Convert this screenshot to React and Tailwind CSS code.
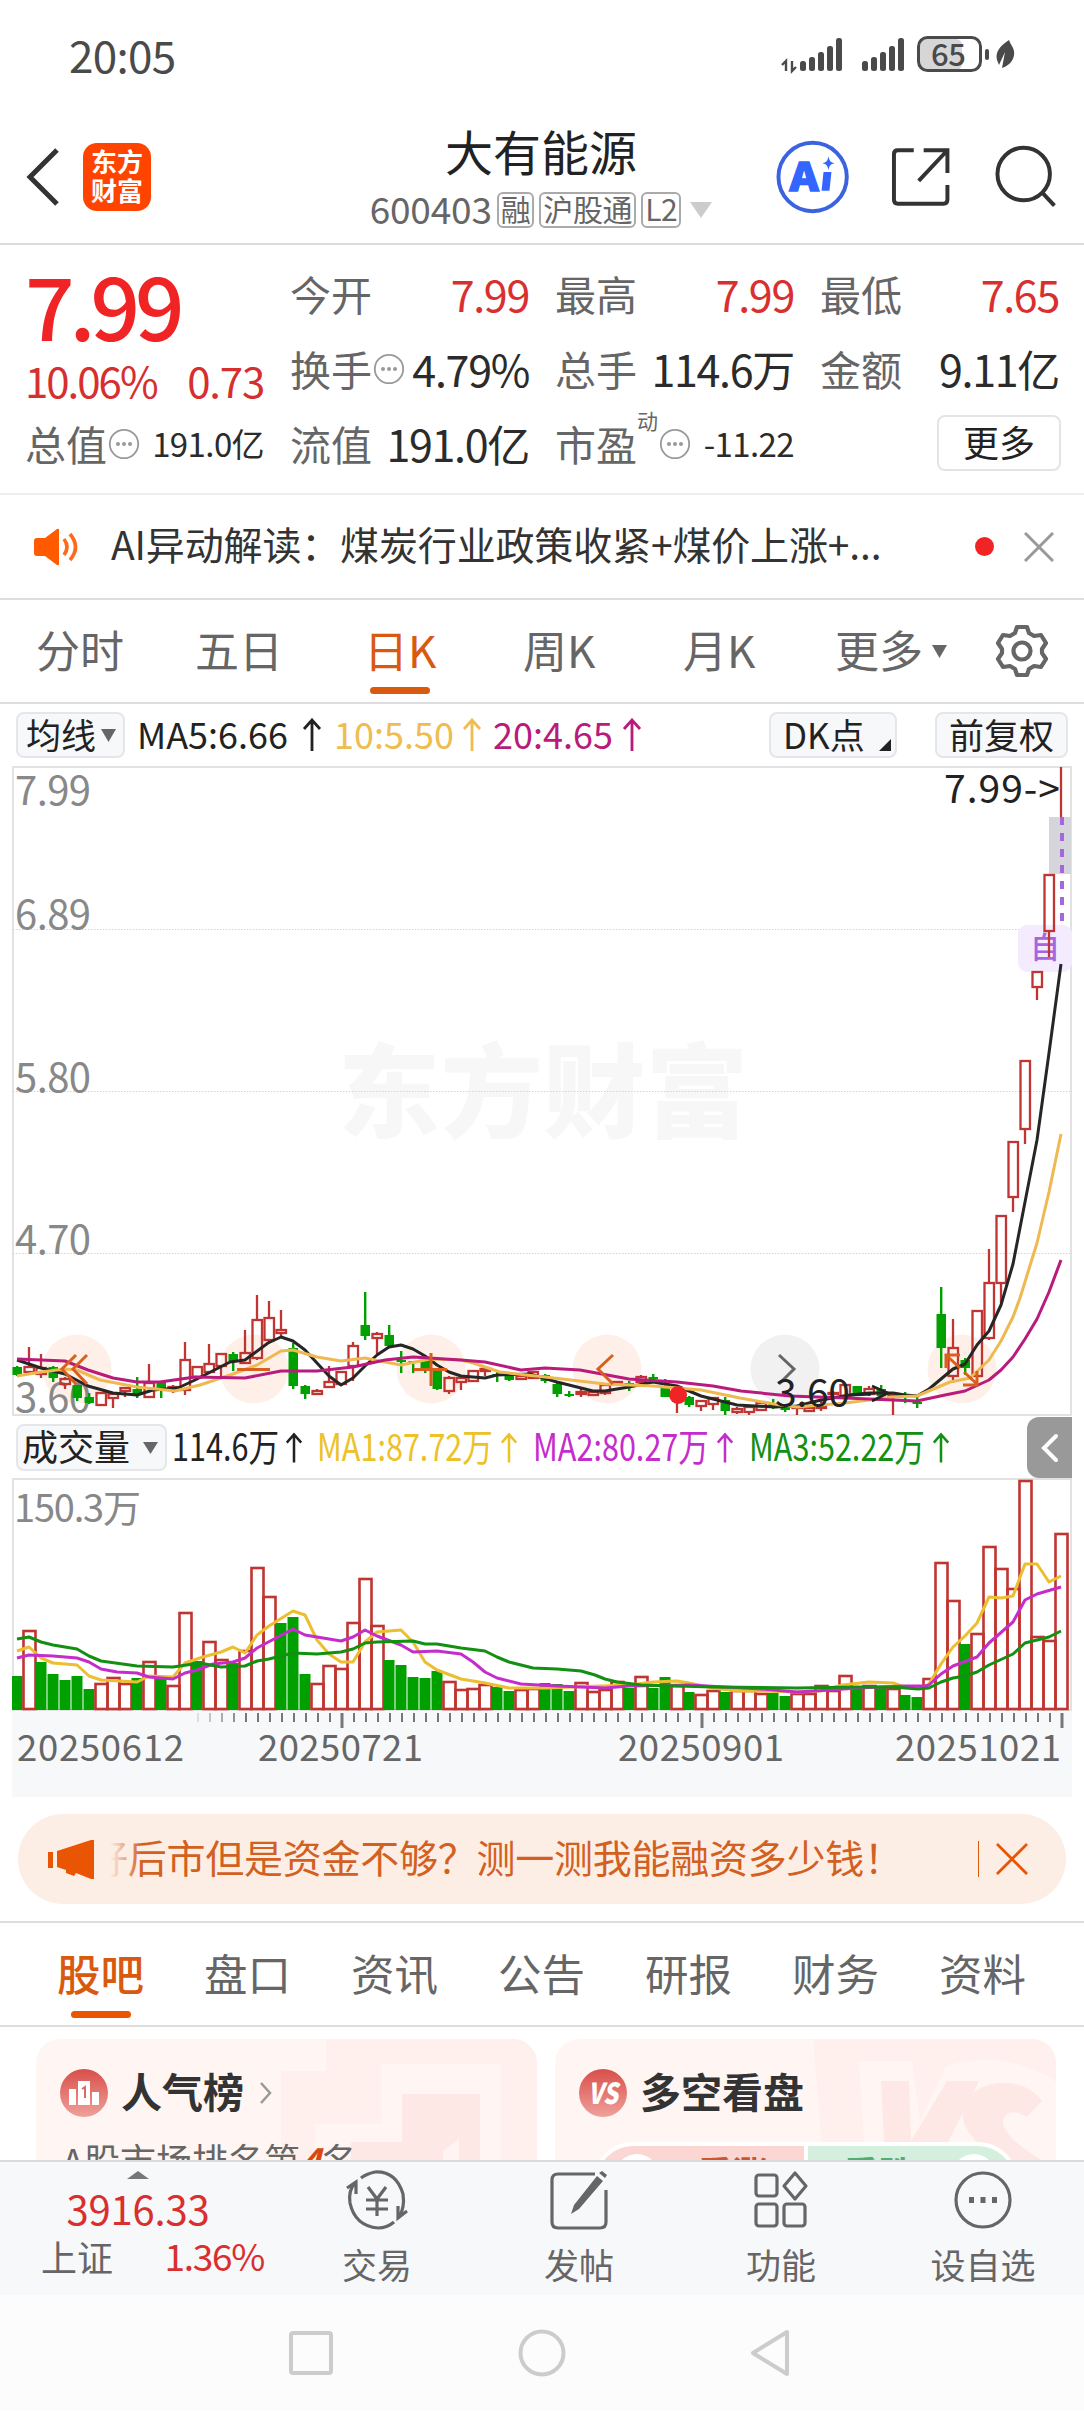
import React from 'react';

// [colour, body top, body bottom, wick top, wick bottom]
const CANDLES = [
  ['g', 1367, 1375, 1366, 1376], ['r', 1367, 1372, 1347, 1372], ['r', 1368, 1374, 1354, 1378], ['g', 1367, 1378, 1366, 1382],
  ['r', 1379, 1384, 1377, 1389], ['g', 1385, 1398, 1385, 1401], ['g', 1397, 1403, 1393, 1404], ['r', 1393, 1405, 1392, 1406],
  ['r', 1394, 1398, 1392, 1408], ['r', 1388, 1391, 1388, 1397], ['g', 1389, 1395, 1377, 1398], ['r', 1383, 1397, 1364, 1397],
  ['g', 1382, 1389, 1382, 1398], ['r', 1387, 1388, 1385, 1393], ['r', 1360, 1390, 1342, 1395], ['r', 1367, 1377, 1366, 1377],
  ['r', 1364, 1372, 1344, 1372], ['r', 1354, 1366, 1354, 1377], ['g', 1354, 1361, 1352, 1371], ['r', 1353, 1363, 1330, 1363],
  ['r', 1320, 1358, 1295, 1360], ['r', 1318, 1340, 1301, 1342], ['r', 1330, 1333, 1310, 1337], ['g', 1348, 1386, 1343, 1389],
  ['g', 1386, 1394, 1385, 1399], ['r', 1391, 1394, 1389, 1395], ['r', 1382, 1387, 1366, 1388], ['r', 1372, 1384, 1371, 1386],
  ['r', 1346, 1366, 1342, 1381], ['g', 1325, 1336, 1292, 1340], ['r', 1334, 1338, 1332, 1354], ['g', 1335, 1346, 1325, 1347],
  ['g', 1360, 1362, 1351, 1373], ['g', 1361, 1363, 1361, 1373], ['g', 1361, 1368, 1361, 1373], ['g', 1370, 1389, 1370, 1390],
  ['r', 1378, 1391, 1376, 1394], ['r', 1378, 1382, 1377, 1390], ['r', 1371, 1381, 1370, 1382], ['r', 1369, 1371, 1368, 1376],
  ['g', 1374, 1376, 1372, 1382], ['g', 1375, 1380, 1374, 1381], ['r', 1376, 1379, 1375, 1380], ['r', 1372, 1378, 1372, 1379],
  ['g', 1375, 1381, 1374, 1383], ['g', 1384, 1394, 1382, 1397], ['g', 1394, 1396, 1391, 1397], ['r', 1392, 1394, 1389, 1397],
  ['r', 1392, 1395, 1390, 1396], ['r', 1385, 1393, 1385, 1395], ['r', 1382, 1384, 1381, 1385], ['g', 1383, 1386, 1381, 1391],
  ['r', 1377, 1382, 1375, 1383], ['g', 1377, 1379, 1374, 1381], ['g', 1388, 1397, 1379, 1397], ['r', 1393, 1396, 1390, 1413],
  ['g', 1397, 1405, 1396, 1407], ['r', 1401, 1406, 1400, 1411], ['r', 1398, 1404, 1398, 1410], ['g', 1400, 1411, 1397, 1415],
  ['r', 1409, 1412, 1407, 1414], ['r', 1407, 1412, 1406, 1415], ['r', 1403, 1410, 1403, 1411], ['g', 1404, 1406, 1399, 1409],
  ['g', 1407, 1410, 1405, 1412], ['r', 1407, 1408, 1406, 1415], ['r', 1408, 1411, 1406, 1412], ['r', 1406, 1408, 1399, 1411],
  ['r', 1393, 1394, 1391, 1396], ['r', 1385, 1396, 1384, 1397], ['g', 1386, 1395, 1386, 1395], ['r', 1389, 1394, 1386, 1396],
  ['g', 1389, 1396, 1385, 1398], ['r', 1394, 1396, 1394, 1415], ['g', 1394, 1396, 1392, 1403], ['g', 1402, 1404, 1397, 1408],
  ['r', 1348, 1348, 1348, 1348], ['g', 1314, 1348, 1287, 1368], ['r', 1348, 1376, 1319, 1383], ['g', 1360, 1368, 1358, 1375],
  ['r', 1311, 1376, 1311, 1376], ['r', 1283, 1338, 1249, 1340], ['r', 1216, 1283, 1216, 1303], ['r', 1142, 1197, 1142, 1212],
  ['r', 1061, 1129, 1061, 1144], ['r', 972, 987, 972, 1000], ['r', 875, 931, 875, 957], ['r', 767, 767, 767, 817],
];

const MA5 = '17,1360 41,1368 65,1374 88,1386 113,1393 137,1395 153,1390 178,1388 195,1380 230,1362 245,1360 268,1343 281,1337 293,1341 305,1350 317,1363 329,1376 341,1385 353,1378 365,1366 377,1355 389,1347 401,1345 413,1349 425,1356 437,1365 449,1372 461,1376 485,1378 497,1375 530,1374 557,1382 593,1391 605,1391 629,1387 653,1382 677,1386 701,1396 737,1405 775,1407 797,1406 821,1400 850,1395 869,1393 893,1393 905,1395 917,1396 929,1389 953,1369 965,1364 977,1345 989,1331 1001,1305 1013,1264 1025,1202 1037,1140 1049,1053 1061,964';
const MA10 = '17,1376 41,1372 65,1369 77,1370 100,1380 137,1387 175,1391 200,1385 233,1374 257,1365 281,1351 293,1350 317,1357 341,1361 365,1358 385,1362 401,1365 430,1359 461,1360 473,1363 500,1372 545,1377 605,1384 653,1386 701,1390 740,1398 780,1405 797,1407 845,1403 893,1397 917,1396 950,1382 970,1378 989,1360 1001,1341 1013,1317 1020,1298 1037,1243 1049,1192 1061,1134';
const MA20 = '17,1359 65,1361 88,1370 113,1378 137,1382 160,1382 195,1377 245,1378 281,1371 317,1371 353,1367 385,1360 413,1357 461,1360 485,1362 521,1370 545,1368 580,1370 629,1379 677,1382 713,1386 741,1391 790,1396 845,1398 893,1400 917,1401 945,1395 965,1391 989,1380 1001,1370 1013,1357 1025,1339 1037,1319 1049,1292 1061,1260';

// tops of the volume bars, colour first
const VOLUMES = [
  'g1676', 'r1630', 'g1662', 'g1674', 'g1680', 'g1676', 'g1689', 'r1683', 'r1677', 'r1683', 'g1678',
  'r1661', 'g1678', 'r1685', 'r1612', 'g1661', 'r1641', 'r1659', 'g1663', 'r1650', 'r1567', 'r1596',
  'g1623', 'g1617', 'g1674', 'r1683', 'r1665', 'r1668', 'r1622', 'r1578', 'r1625', 'g1660', 'g1665',
  'g1677', 'g1678', 'g1671', 'r1681', 'r1689', 'r1688', 'r1684', 'g1687', 'g1691', 'r1689', 'r1688',
  'g1683', 'g1684', 'g1691', 'r1682', 'r1691', 'r1689', 'r1681', 'g1688', 'r1676', 'g1688', 'g1677',
  'r1685', 'g1692', 'r1694', 'r1690', 'g1692', 'r1690', 'r1690', 'r1693', 'g1693', 'g1696', 'r1693',
  'r1693', 'r1685', 'r1690', 'r1675', 'g1688', 'r1685', 'g1687', 'r1688', 'g1695', 'g1697', 'r1678',
  'r1562', 'r1600', 'g1644', 'r1633', 'r1546', 'r1568', 'r1588', 'r1480', 'r1636', 'r1640', 'r1533',
];

const VMA1 = '17,1651 29,1647 41,1658 53,1663 77,1665 89,1676 101,1680 137,1682 149,1676 173,1677 185,1663 203,1657 221,1652 233,1647 245,1653 257,1635 269,1626 293,1611 305,1615 317,1640 329,1654 341,1662 353,1662 365,1642 377,1632 401,1630 413,1642 425,1662 437,1670 461,1679 485,1683 509,1688 545,1688 629,1685 653,1682 677,1681 689,1683 713,1688 737,1691 761,1691 797,1692 821,1691 842,1685 869,1682 893,1683 905,1687 925,1687 929,1684 941,1664 953,1647 965,1636 977,1623 989,1597 1001,1598 1013,1596 1025,1564 1037,1564 1049,1582 1061,1576';
const VMA2 = '17,1658 29,1655 53,1656 77,1658 89,1662 101,1669 117,1672 137,1673 149,1677 173,1679 185,1673 197,1670 213,1664 233,1662 245,1658 257,1648 293,1629 305,1635 329,1639 341,1641 353,1637 365,1630 377,1636 401,1645 413,1652 437,1651 461,1654 473,1662 485,1672 497,1678 521,1684 557,1686 605,1688 629,1686 689,1685 761,1689 797,1692 831,1690 857,1688 905,1686 925,1686 929,1685 941,1674 953,1666 977,1657 989,1643 1013,1622 1025,1600 1037,1594 1061,1587';
const VMA3 = '17,1639 29,1637 41,1642 53,1645 77,1649 89,1656 101,1661 137,1666 173,1667 200,1663 221,1667 245,1666 257,1661 269,1659 293,1653 317,1654 341,1652 353,1649 365,1643 377,1642 413,1641 425,1644 437,1644 461,1648 485,1651 497,1657 509,1662 533,1668 557,1669 581,1671 595,1675 605,1679 617,1682 641,1685 713,1687 797,1688 857,1687 893,1687 918,1689 929,1688 941,1682 953,1678 965,1676 977,1672 989,1665 1013,1654 1025,1643 1049,1637 1061,1631';

const RED = '#c03531';
const GREEN = '#00a000';
const candleX = (i) => 17 + i * 12;

function UpArrow({ className }) {
  return (
    <svg className={className} viewBox="0 0 20 34" fill="none" stroke="currentColor" strokeWidth="2.8">
      <path d="M10 33V2M2 11l8-9 8 9" />
    </svg>
  );
}

function MoreDots() {
  return (
    <svg className="ml-px h-8 w-8 shrink-0" viewBox="0 0 32 32">
      <circle cx="16" cy="16" r="14.2" fill="none" stroke="#999" strokeWidth="1.8" />
      <circle cx="10" cy="16" r="2" fill="#999" />
      <circle cx="16" cy="16" r="2" fill="#999" />
      <circle cx="22" cy="16" r="2" fill="#999" />
    </svg>
  );
}

function Triangle({ className }) {
  return (
    <svg className={className} viewBox="0 0 16 13" preserveAspectRatio="none" fill="currentColor">
      <path d="M0 0h16L8 13z" />
    </svg>
  );
}

function StatusBar() {
  const bars = [[0, 10], [9, 14], [18, 19], [27, 25], [36, 33]];
  return (
    <div className="flex h-[110px] items-center justify-between pr-[68px] pl-[69px] text-[#4a4a4a]">
      <span className="pb-0.5 text-[44px] leading-none tracking-[-0.7px]">20:05</span>
      <svg className="h-10 w-[236px]" viewBox="780 36 236 40" fill="#4a4a4a">
        <path d="M786 72V62l-4 4M792 62v10l4-4" fill="none" stroke="#4a4a4a" strokeWidth="2.4" />
        {bars.map(([x, h]) => (
          <rect key={x} x={800 + x} y={72 - h} width="6" height={h} rx="2.5" />
        ))}
        {bars.map(([x, h]) => (
          <rect key={x} x={862 + x} y={72 - h} width="6" height={h} rx="2.5" />
        ))}
        <rect x="920" y="40" width="42" height="31" rx="6" fill="#d6d6d6" />
        <rect x="918.5" y="38.5" width="62" height="33" rx="9" fill="none" stroke="#4a4a4a" strokeWidth="3" />
        <rect x="985" y="50" width="4" height="11" rx="2" />
        <path d="M1009 41c-9 6-14 12-12 20l2 5 6-13-3 16c9-3 13-10 12-17-.5-4-4-7-5-11z" />
        <text x="931" y="67" fontSize="31" fontWeight="500" textLength="35">65</text>
      </svg>
    </div>
  );
}

function Tag({ children }) {
  return (
    <span className="flex h-9 items-center rounded-md border-2 border-[#aaa] px-[2px] pb-[3px] text-[30px] leading-none tracking-[-0.4px]">
      {children}
    </span>
  );
}

function Header() {
  return (
    <header className="flex h-[135px] items-center justify-between border-b-2 border-[#ddd] pr-7 pl-[26px]">
      <div className="flex w-[280px] items-center gap-[23px]">
        <svg className="h-[58px] w-[34px]" viewBox="0 0 34 58" fill="none" stroke="#333" strokeWidth="5">
          <path d="M31 2L4 29l27 27" />
        </svg>
        <div className="flex h-[68px] w-[68px] flex-col items-center justify-center rounded-[14px] bg-[#ff4400] pb-1 text-[26px] leading-[29px] font-bold text-white">
          <span>东方</span>
          <span>财富</span>
        </div>
      </div>

      <div className="flex flex-col items-center">
        <h1 className="text-[48px] leading-[52px] text-[#222]">大有能源</h1>
        <div className="mt-[14px] flex items-center gap-[5px] text-[#666]">
          <span className="pb-[3px] text-[37px] leading-none tracking-[-0.2px]">600403</span>
          <Tag>融</Tag>
          <Tag>沪股通</Tag>
          <Tag>L2</Tag>
          <Triangle className="ml-1 h-4 w-[22px] text-[#ccc]" />
        </div>
      </div>

      <div className="flex w-[280px] items-center justify-end">
        <svg className="h-[74px] w-[74px]" viewBox="0 0 74 74">
          <circle cx="37" cy="37" r="34.5" fill="#fff" stroke="#3b63e0" strokeWidth="4" />
          <text x="14" y="51" fontSize="40" fontWeight="900" fill="#3366ff" stroke="#3366ff" strokeWidth="1.5" textLength="29" lengthAdjust="spacingAndGlyphs">A</text>
          <path d="M48 32h8l-2 19h-8z" fill="#3366ff" />
          <path d="M53 16c1 5 2 6 6 7-4 1-5 2-6 7-1-5-2-6-6-7 4-1 5-2 6-7z" fill="#3366ff" />
        </svg>
        <svg className="ml-[41px] h-[62px] w-[62px]" viewBox="0 0 62 62" fill="none" stroke="#333" strokeWidth="4">
          <path d="M24 4H8q-4 0-4 4v46q0 4 4 4h46q4 0 4-4V39M34 4h24v23M58 4L29 35" />
        </svg>
        <svg className="ml-[41px] h-16 w-16" viewBox="0 0 64 64" fill="none" stroke="#333" strokeWidth="4">
          <circle cx="31" cy="29" r="26.5" />
          <path d="M50 48l12 13" />
        </svg>
      </div>
    </header>
  );
}

function Cell({ label, value, red, small, dots, sup }) {
  return (
    <div className="flex h-[75px] items-center justify-between whitespace-nowrap">
      <span className="flex items-center text-[41px] leading-none text-[#666]">
        {label}
        {sup && <sup className="-top-6 text-[21px]">{sup}</sup>}
        {dots && <MoreDots />}
      </span>
      <span className={`leading-none ${small ? 'text-[33px] tracking-[-0.6px]' : 'text-[43px] tracking-[-1.3px]'} ${red ? 'text-[#d92f2f]' : 'text-[#2b2b2b]'}`}>
        {value}
      </span>
    </div>
  );
}

function Quote() {
  return (
    <section className="flex h-[250px] gap-[26px] border-b-2 border-[#eee] px-[25px] pt-[11px]">
      <div className="w-[239px]">
        <div className="flex h-[98px] items-center pb-[4px] text-[87px] leading-none font-medium tracking-[-5px] text-[#f02424]">7.99</div>
        <div className="flex h-[52px] items-center justify-between text-[42px] leading-none tracking-[-2px] text-[#d62f2f]">
          <span>10.06%</span>
          <span className="tracking-[-1.2px]">0.73</span>
        </div>
        <Cell label="总值" value="191.0亿" small dots />
      </div>
      <div className="grid flex-1 grid-cols-3 content-start gap-x-[26px]">
        <Cell label="今开" value="7.99" red />
        <Cell label="最高" value="7.99" red />
        <Cell label="最低" value="7.65" red />
        <Cell label="换手" value="4.79%" dots />
        <Cell label="总手" value="114.6万" />
        <Cell label="金额" value="9.11亿" />
        <Cell label="流值" value="191.0亿" />
        <Cell label="市盈" value="-11.22" small dots sup="动" />
        <div className="flex h-[73px] items-center justify-end">
          <button className="mr-[-2px] h-14 w-[124px] rounded-lg border-2 border-[#e4e4e4] pb-1 text-[36px] leading-none text-[#222]">更多</button>
        </div>
      </div>
    </section>
  );
}

function Headline() {
  return (
    <section className="flex h-[105px] items-center border-b-2 border-[#ddd] pr-[30px] pl-[33px]">
      <svg className="h-10 w-[46px]" viewBox="0 0 46 40" fill="#ff5a00">
        <path d="M4 11h8L24 2q2-1 2 1v34q0 2-2 1L12 29H4q-3 0-3-3V14q0-3 3-3z" />
        <path d="M31 12q6 8 0 16M37 7q11 13 0 26" fill="none" stroke="#ff6a1a" strokeWidth="3.6" />
      </svg>
      <p className="ml-8 flex-1 pb-1.5 text-[39px] leading-none tracking-[-0.15px] whitespace-nowrap text-[#333]">AI异动解读：煤炭行业政策收紧+煤价上涨+...</p>
      <span className="h-[19px] w-[19px] rounded-full bg-[#f02424]" />
      <svg className="ml-[30px] h-[30px] w-[30px]" viewBox="0 0 30 30" stroke="#999" strokeWidth="3">
        <path d="M1 1l28 28M29 1L1 29" />
      </svg>
    </section>
  );
}

function PeriodTabs() {
  return (
    <nav className="flex h-[104px] items-center border-b-2 border-[#ddd] pl-9 text-[44px] leading-none text-[#666]">
      <span className="w-[159px] pb-1">分时</span>
      <span className="w-[169px] pb-1">五日</span>
      <span className="relative w-[159px] pb-1 text-[#d9590f]">
        日K
        <i className="absolute -bottom-[19px] left-[6px] h-[7px] w-[60px] rounded-full bg-[#d9590f]" />
      </span>
      <span className="w-[160px] pb-1">周K</span>
      <span className="w-[152px] pb-1">月K</span>
      <span className="pb-1">更多</span>
      <Triangle className="ml-[9px] h-[13px] w-[15px]" />
      <svg className="ml-[48px] h-[54px] w-[54px]" viewBox="0 0 54 54" fill="none" stroke="#666" strokeWidth="4.200" strokeLinejoin="round">
        <path d="M22 3h10l2 6 5 3 7-1 5 8-4 6v4l4 6-5 8-7-1-5 3-2 6H22l-2-6-5-3-7 1-5-8 4-6v-4l-4-6 5-8 7 1 5-3z" />
        <circle cx="27" cy="27" r="8.5" />
      </svg>
    </nav>
  );
}

function IndicatorRow() {
  return (
    <div className="flex h-[62px] items-center pr-4 pl-4 text-[36px] leading-none text-[#222]">
      <span className="flex h-[46px] w-[109px] items-center rounded-lg border-2 border-[#e4e6ea] bg-[#f7f8fa] pl-2 text-[35px]">
        <span className="pb-1">均线</span>
        <Triangle className="ml-[5px] h-[13px] w-[15px] text-[#666]" />
      </span>
      <span className="ml-[12px] w-[165px] pb-1">MA5:6.66</span>
      <UpArrow className="h-[34px] w-5" />
      <span className="ml-3 w-[128px] pb-1 text-[#efbc50]">10:5.50</span>
      <UpArrow className="h-[34px] w-5 text-[#efbc50]" />
      <span className="ml-[11px] w-[129px] pb-1 text-[#b81b7c]">20:4.65</span>
      <UpArrow className="h-[34px] w-5 text-[#b81b7c]" />
      <span className="ml-auto flex h-[46px] w-[128px] items-center justify-between rounded-lg border-2 border-[#e4e6ea] bg-[#f7f8fa] pr-1 pl-[12px] text-[35px]">
        <span className="pb-1">DK点</span>
        <svg className="mt-5 h-3 w-3" viewBox="0 0 12 12"><path d="M12 0v12H0z" fill="#222" /></svg>
      </span>
      <span className="ml-[38px] flex h-[46px] w-[133px] items-center justify-center rounded-lg border-2 border-[#e4e6ea] bg-[#f7f8fa] pb-1 text-[35px]">前复权</span>
    </div>
  );
}

function PriceChart() {
  return (
    <svg className="ml-3 block h-[651px] w-[1061px]" viewBox="12 766 1061 651" fill="none">
      <text x="338" y="1130" fontSize="102" fontWeight="900" fill="#f7f7f7" textLength="410">东方财富</text>
      <path d="M13 767H1071V1415H13z" stroke="#e2e2e2" strokeWidth="2" />
      <path d="M13 929.5H1071M13 1091.5H1071M13 1253.5H1071" stroke="#d4d4d4" strokeDasharray="1.5 1.5" />

      {/* pan and zoom controls under the candles */}
      <g fill="#fef0e9">
        <circle cx="77" cy="1369" r="34.5" />
        <circle cx="254" cy="1369" r="34.5" />
        <circle cx="431" cy="1369" r="34.5" />
        <circle cx="607" cy="1369" r="34.5" />
        <circle cx="785" cy="1369" r="34.5" fill="#f1f1f1" />
        <circle cx="962" cy="1369" r="34.5" />
      </g>
      <g fontSize="40" fill="#888">
        <text x="15" y="805" textLength="76">7.99</text>
        <text x="15" y="929" textLength="76">6.89</text>
        <text x="15" y="1092" textLength="76">5.80</text>
        <text x="15" y="1254" textLength="76">4.70</text>
        <text x="15" y="1412" textLength="76">3.60</text>
      </g>

      <rect x="1049" y="817" width="22" height="57" fill="#d4d6dc" />
      <rect x="1018" y="925" width="54" height="47" rx="9" fill="#f5ebff" />
      <text x="1030" y="958" fontSize="30" fontWeight="500" fill="#a566e0">自</text>
      <path d="M1062 817V921" stroke="#a566e0" strokeWidth="4" strokeDasharray="8 8" />

      {CANDLES.map(([kind, top, bottom, high, low], i) => {
        const x = candleX(i);
        if (kind === 'g') {
          return (
            <g key={i} fill={GREEN}>
              <rect x={x - 1} y={high} width="2.4" height={low - high} />
              <rect x={x - 4.5} y={top} width="9.5" height={bottom - top} />
            </g>
          );
        }
        return (
          <g key={i} stroke={RED} strokeWidth="2.3">
            <path d={`M${x} ${high}V${top}M${x} ${bottom}V${low}`} />
            <rect x={x - 4.5} y={top} width="9.5" height={bottom - top} />
          </g>
        );
      })}

      <g strokeWidth="3" strokeLinejoin="round">
        <polyline points={MA5} stroke="#262626" />
        <polyline points={MA10} stroke="#efb951" />
        <polyline points={MA20} stroke="#b81b7c" />
      </g>
      <circle cx="678" cy="1395" r="9" fill="#f02424" />

      <g stroke="#d95f1c" strokeWidth="3">
        <path d="M76 1355l-14 14 14 15M87 1355l-14 14 14 15" />
        <path d="M237 1369.500h33M414 1369.500h33M431 1353v33" />
        <path d="M613 1355l-15 14 15 15" />
        <path d="M946 1368v-13h14M947 1356l13 12M964 1372l13 12M977 1371v14h-14" />
        <path d="M779 1355l15 14-15 15" stroke="#666" />
      </g>

      <text x="775" y="1407" fontSize="39" fill="#222" textLength="75">3.60</text>
      <path d="M851 1395l20-1" stroke="#222" strokeWidth="3" />
      <path d="M872 1386l16 7-16 8" stroke="#222" strokeWidth="2.600" />
      <text x="944" y="803" fontSize="39" fill="#222" textLength="116">7.99-&gt;</text>
    </svg>
  );
}

function VolumeLabel({ children, className }) {
  return (
    <span className={`flex items-center whitespace-nowrap ${className}`}>
      <span className="flex-1">
        <span className="inline-block w-0 origin-left scale-x-[.805] pb-1.5">{children}</span>
      </span>
      <UpArrow className="h-[34px] w-[18px]" />
    </span>
  );
}

function VolumeRow() {
  return (
    <div className="flex h-[61px] items-center pl-4 text-[38px] leading-none">
      <span className="flex h-[47px] w-[151px] items-center rounded-lg border-2 border-[#e4e6ea] bg-[#f7f8fa] pl-[4px] text-[36px] text-[#222]">
        <span className="pb-1.5">成交量</span>
        <Triangle className="ml-[13px] h-3 w-[15px] text-[#666]" />
      </span>
      <VolumeLabel className="ml-[5px] w-[131px] text-[#222]">114.6万</VolumeLabel>
      <VolumeLabel className="ml-[14px] w-[201px] text-[#ecc228]">MA1:87.72万</VolumeLabel>
      <VolumeLabel className="ml-[15px] w-[201px] text-[#c52dcb]">MA2:80.27万</VolumeLabel>
      <VolumeLabel className="ml-[15px] w-[201px] text-[#129012]">MA3:52.22万</VolumeLabel>
      <span className="mr-3 ml-auto flex h-[61px] w-[45px] items-center justify-center rounded-l-xl bg-[#999]">
        <svg className="h-[30px] w-[18px]" viewBox="0 0 18 30" fill="none" stroke="#fff" strokeWidth="4" strokeLinecap="round">
          <path d="M15 3L3 15l12 12" />
        </svg>
      </span>
    </div>
  );
}

function VolumeChart() {
  return (
    <svg className="ml-3 block h-[319px] w-[1061px]" viewBox="12 1478 1061 319" fill="none">
      <rect x="12" y="1711" width="1060" height="86" fill="#f7f8fa" />
      <path d="M13 1479H1071V1710H13z" stroke="#e2e2e2" strokeWidth="2" />
      <text x="14" y="1522" fontSize="38" fill="#888" textLength="127">150.3万</text>
      {VOLUMES.map((v, i) => {
        const x = candleX(i);
        const top = Number(v.slice(1));
        return v[0] === 'g'
          ? <rect key={i} x={x - 5.5} y={top} width="11" height={1710 - top} fill={GREEN} />
          : <rect key={i} x={x - 5.5} y={top + 1} width="12" height={1708 - top} stroke={RED} strokeWidth="2.6" />;
      })}
      <g strokeWidth="3" strokeLinejoin="round">
        <polyline points={VMA1} stroke="#ebbf2f" />
        <polyline points={VMA2} stroke="#c52dcb" />
        <polyline points={VMA3} stroke="#129012" />
      </g>
      {Array.from({ length: 73 }, (_, i) => (
        <path
          key={i}
          d={`M${198 + i * 12} 1713v${i % 30 === 12 ? 15 : 9}`}
          stroke="#777"
          strokeWidth={i % 30 === 12 ? 3 : 2}
          opacity={Math.min(1, 0.2 + i * 0.2)}
        />
      ))}
      <g fontSize="36.5" fill="#666">
        <text x="17" y="1761" textLength="167">20250612</text>
        <text x="258" y="1761" textLength="165">20250721</text>
        <text x="618" y="1761" textLength="166">20250901</text>
        <text x="895" y="1761" textLength="166">20251021</text>
      </g>
    </svg>
  );
}

function Promo() {
  return (
    <section className="flex h-[126px] items-center border-b-2 border-[#ddd] px-[18px]">
      <div className="flex h-[90px] w-full items-center rounded-full bg-[#fdeee5] pr-[38px] pl-[30px]">
        <svg className="h-10 w-[46px]" viewBox="0 0 46 40" fill="#ea5504">
          <path d="M0 13h5v16H0zM9 12L43 1h3v39h-3l-15-6-2 3-8-3v-3l-9-3z" />
        </svg>
        <div className="relative ml-[16px] flex-1 overflow-hidden">
          <p className="-ml-[21px] pt-1 pb-[10px] text-[39px] leading-none tracking-[-0.25px] whitespace-nowrap text-[#d2601f]">好后市但是资金不够？测一测我能融资多少钱！</p>
          <i className="absolute inset-y-0 left-0 w-8 bg-linear-to-r from-[#fdeee5] to-transparent" />
        </div>
        <i className="h-9 w-px bg-[#d9590f]" />
        <svg className="ml-[17px] h-8 w-8" viewBox="0 0 32 32" stroke="#ea5504" strokeWidth="2.8">
          <path d="M1 1l30 30M31 1L1 31" />
        </svg>
      </div>
    </section>
  );
}

function InfoTabs() {
  const tabs = ['股吧', '盘口', '资讯', '公告', '研报', '财务', '资料'];
  return (
    <nav className="flex h-[104px] items-center border-b-2 border-[#ddd] px-[27px] text-[43.5px] leading-none text-[#666]">
      {tabs.map((tab, i) => (
        <span key={tab} className={`relative w-[147px] pb-0.5 text-center ${i === 0 ? 'font-medium text-[#d9590f]' : ''}`}>
          {tab}
          {i === 0 && <i className="absolute -bottom-[21px] left-[44px] h-[7px] w-[60px] rounded-full bg-[#ea5504]" />}
        </span>
      ))}
    </nav>
  );
}

function Cards() {
  return (
    <section className="flex h-[133px] gap-[18px] overflow-hidden pt-3 pr-7 pl-9">
      <div className="relative h-[200px] flex-1 rounded-t-[24px] bg-[#fff6f3]">
        <svg className="absolute top-0 right-0 h-[121px] w-[256px] rounded-tr-[24px]" viewBox="0 0 256 121">
          <path d="M45 0H256V121H0V32H45z" fill="#fff0ed" />
          <path d="M100 25h120v96H34V85h66z" fill="#fff5f2" />
          <path d="M121 55h78v66H70v-18h51z" fill="#fde8e5" />
          <path d="M162 112l16-12v21h-16z" fill="#fff4f1" />
        </svg>
        <div className="relative flex h-[108px] items-center pl-6">
          <svg className="h-12 w-12" viewBox="0 0 48 48">
            <defs>
              <linearGradient id="badge" x1="0" y1="0" x2="0" y2="1">
                <stop offset="0" stopColor="#d84f4a" />
                <stop offset="1" stopColor="#f0a09b" />
              </linearGradient>
            </defs>
            <circle cx="24" cy="24" r="24" fill="url(#badge)" />
            <path d="M9 20h7v16H9zM18 12h12v24H18zM32 23h7v13h-7z" fill="#fff" />
            <path d="M22 20l3-2v11" fill="none" stroke="#d86a66" strokeWidth="2" />
          </svg>
          <span className="ml-[13px] pb-1.5 text-[41px] leading-none font-bold text-[#333]">人气榜</span>
          <svg className="ml-[15px] h-6 w-3.5" viewBox="0 0 14 24" fill="none" stroke="#999" strokeWidth="2.500">
            <path d="M2 2l9 10-9 10" />
          </svg>
        </div>
        <p className="relative -mt-[6px] pl-[26px] text-[36px] leading-none text-[#666]">
          A股市场排名第<b className="text-[#d9480f] italic">4</b>名
        </p>
      </div>

      <div className="relative h-[200px] flex-1 overflow-hidden rounded-t-[24px] bg-[#fff6f3]">
        <svg className="absolute top-0 right-0 h-[121px] w-[243px]" viewBox="0 0 243 121">
          <path d="M0 0h243v121H10z" fill="#fff0ed" />
          <path d="M46 22h53l8 60 26-55q60-18 110 16v78H52z" fill="#fff5f2" />
          <path d="M68 42h28l2 60 36-60h32l-40 79H72z" fill="#fde8e5" />
          <path d="M229 62q-15-20-45-18-40 8-33 40 5 15 33 37h44q-40-25-38-40 5-14 24-3z" fill="#fde8e5" />
        </svg>
        <div className="relative flex h-[108px] items-center pl-6">
          <svg className="h-12 w-12" viewBox="0 0 48 48">
            <circle cx="24" cy="24" r="24" fill="url(#badge)" />
            <text x="9" y="35" fontSize="29" fontWeight="900" fontStyle="italic" fill="#fff" textLength="30" lengthAdjust="spacingAndGlyphs">VS</text>
          </svg>
          <span className="ml-[13px] pb-1.5 text-[41px] leading-none font-bold text-[#333]">多空看盘</span>
        </div>
        <div className="relative mx-[38px] -mt-[5px] flex h-20 gap-1 rounded-full border-4 border-white bg-white text-[35px] leading-none font-bold">
          <div className="flex flex-1 items-start justify-end rounded-l-full bg-[#fbd6d3] pt-2 pr-9 text-[#cf5530]">看涨</div>
          <div className="flex flex-1 items-start rounded-r-full bg-[#d4efdd] pt-2 pl-9 text-[#4fae72]">看跌</div>
          <i className="absolute top-[8px] left-[18px] h-11 w-11 rounded-full bg-white" />
          <i className="absolute top-[8px] right-[18px] h-11 w-11 rounded-full bg-white" />
        </div>
      </div>
    </section>
  );
}

function Action({ label, children }) {
  return (
    <div className="flex w-[202px] flex-col items-center pt-[6px]">
      <svg className="h-[64px] w-[68px]" viewBox="0 0 68 64" fill="none" stroke="#666" strokeWidth="3.2">{children}</svg>
      <span className="mt-[14px] text-[35px] leading-none text-[#666]">{label}</span>
    </div>
  );
}

function BottomBar() {
  return (
    <footer className="flex h-[135px] border-t-2 border-[#d9dadd] bg-[#f7f8fa]">
      <div className="flex w-[276px] flex-col items-center">
        <svg className="mt-[9px] h-2 w-[22px]" viewBox="0 0 22 8"><path d="M11 0l11 8H0z" fill="#777" /></svg>
        <span className="mt-[9px] text-[40px] leading-none tracking-[-0.2px] text-[#d92f2f]">3916.33</span>
        <div className="mt-[9px] flex w-full items-center justify-between pr-3 pl-[41px] text-[36px] leading-none text-[#666]">
          <span>上证</span>
          <span className="text-[37px] tracking-[-1.3px] text-[#d92f2f]">1.36%</span>
        </div>
      </div>
      <Action label="交易">
        <path d="M18 10q5-4 14-6 21-1 28 22 2 14-4 23M51 54q-7 6-16 6Q12 58 7 35 5 23 12 15M4 20l9-6v12M64 43l-9 7V38" />
        <path d="M25 19l9 12 9-12M34 31v17M23 32h22M23 41h22" />
      </Action>
      <Action label="发帖">
        <path d="M50 6H13q-6 0-6 6v42q0 6 6 6h42q6 0 6-6V22" />
        <path d="M29 37L52 8l6 5-24 28-8 5zM54 5l3-2 5 4-2 3z" fill="#666" stroke="none" />
      </Action>
      <Action label="功能">
        <rect x="9" y="7" width="21" height="21" rx="3" />
        <rect x="9" y="36" width="21" height="22" rx="3" />
        <rect x="37" y="36" width="21" height="22" rx="3" />
        <path d="M48 5l11 13-11 13-11-13z" strokeLinejoin="round" />
      </Action>
      <Action label="设自选">
        <circle cx="34" cy="32" r="27" />
        <path d="M20 32h5M31.500 32h5M43 32h5" strokeWidth="6" />
      </Action>
    </footer>
  );
}

function SystemNav() {
  return (
    <div className="flex h-[116px] items-center justify-between bg-[#fcfcfc] pr-[294px] pl-[289px]">
      <svg className="h-[46px] w-11" viewBox="0 0 44 46" fill="none" stroke="#ccc" strokeWidth="4"><rect x="2" y="3" width="40" height="40" rx="2" /></svg>
      <svg className="h-12 w-12" viewBox="0 0 48 48" fill="none" stroke="#ccc" strokeWidth="4"><circle cx="24" cy="24" r="21.5" /></svg>
      <svg className="h-12 w-10" viewBox="0 0 40 48" fill="none" stroke="#ccc" strokeWidth="4" strokeLinejoin="round"><path d="M37 3v42L3 24z" /></svg>
    </div>
  );
}

export default function App() {
  return (
    <div className="h-[2412px] w-[1084px] overflow-hidden bg-white font-['Noto_Sans_CJK_SC',sans-serif]">
      <StatusBar />
      <Header />
      <Quote />
      <Headline />
      <PeriodTabs />
      <IndicatorRow />
      <PriceChart />
      <VolumeRow />
      <VolumeChart />
      <Promo />
      <InfoTabs />
      <Cards />
      <BottomBar />
      <SystemNav />
    </div>
  );
}
